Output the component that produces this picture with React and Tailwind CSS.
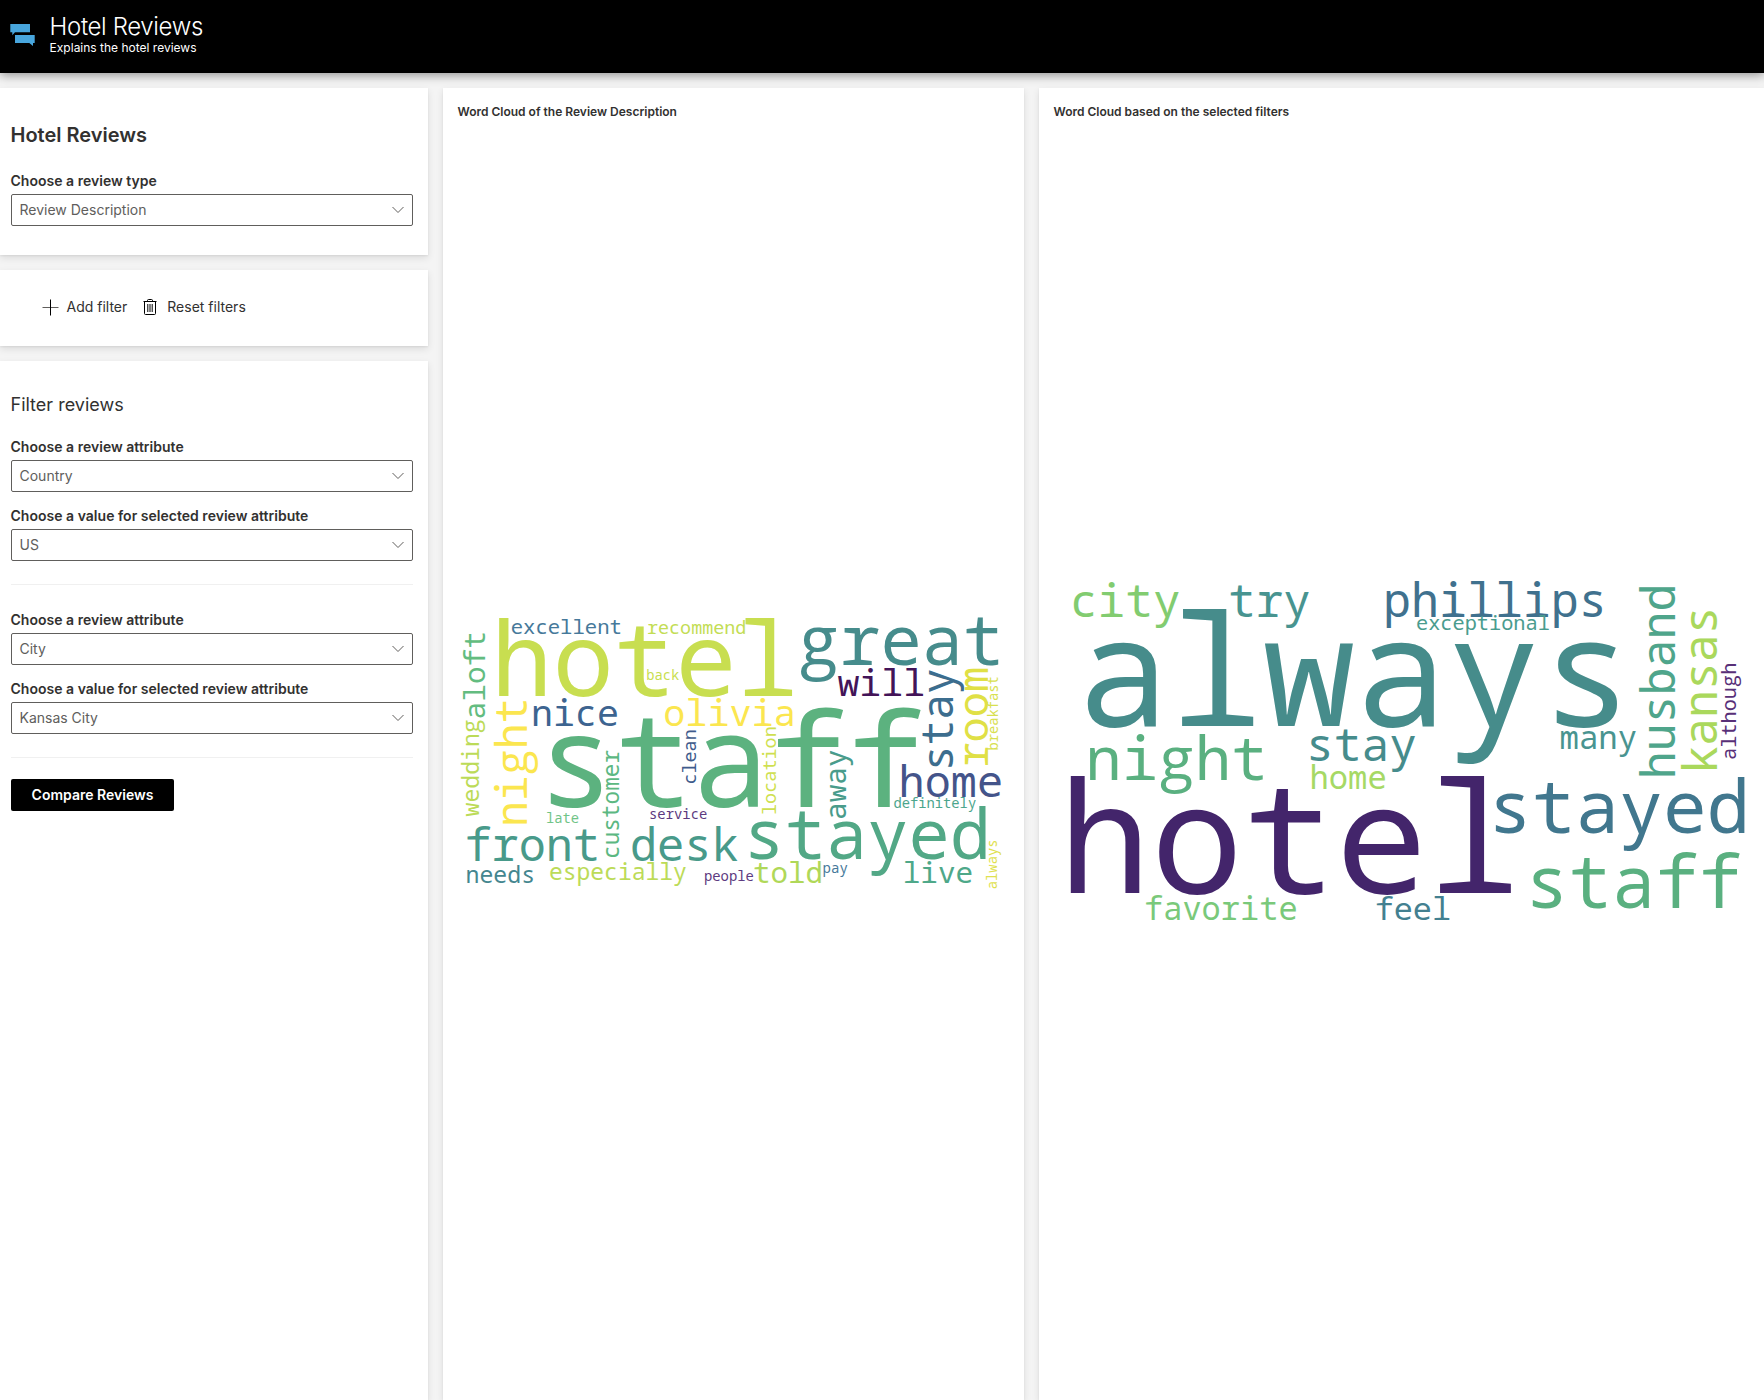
import React from "react";

// Each word: [text, font size, start of the baseline, cross-axis position of the baseline, colour]
const descriptionCloud = {
  viewBox: "458 615.8 551 275",
  label: "Word cloud of the review description",
  across: [
    ["excellent", 20.6, 510.7, 634.7, "#46799a"],
    ["recommend", 18.4, 647, 634.7, "#c3dd55"],
    ["hotel", 102.4, 491, 696.7, "#c8de50"],
    ["nice", 36.6, 531.1, 727, "#3d6490"],
    ["olivia", 36.8, 663.3, 727, "#fbe64f"],
    ["back", 13.8, 646.2, 680.4, "#c8de50"],
    ["staff", 129.1, 537.2, 808, "#5cb27f"],
    ["late", 13.8, 545.9, 823.8, "#70c487"],
    ["service", 13.9, 649, 819.8, "#5d3a80"],
    ["front", 45.2, 464.5, 861.7, "#489a8a"],
    ["desk", 45.3, 629.9, 861.7, "#489a8a"],
    ["needs", 23.2, 465.5, 884, "#44868f"],
    ["especially", 23, 548.9, 880.4, "#bcdb58"],
    ["people", 13.9, 703.9, 881.8, "#5d3a80"],
    ["great", 68.7, 798, 666, "#468c8c"],
    ["will", 36.6, 837.4, 696.7, "#431458"],
    ["home", 43.5, 898.6, 798.3, "#44548a"],
    ["definitely", 13.8, 893.4, 808.8, "#4ba58c"],
    ["stayed", 68.7, 743.6, 860.3, "#52a886"],
    ["told", 29.2, 753, 884, "#b0d858"],
    ["pay", 14, 822.6, 873.8, "#46799a"],
    ["live", 29.4, 902.7, 884, "#4ea889"],
  ],
  up: [
    ["aloft", 29.5, 720.3, 485.3, "#63bc80"],
    ["wedding", 23.1, 817.2, 479, "#bcdb58"],
    ["night", 43.2, 827.9, 527, "#fbe64f"],
    ["clean", 18.4, 785.3, 696, "#3f5b8c"],
    ["customer", 22.7, 859.7, 618.7, "#5cb882"],
    ["stay", 42.9, 772.1, 953.3, "#3c6d8e"],
    ["room", 42, 768.4, 988, "#e0e045"],
    ["breakfast", 13.8, 751.4, 998, "#d8e04f"],
    ["location", 18.5, 815.8, 776.3, "#cfdf50"],
    ["away", 29.4, 820.7, 846, "#499c8b"],
    ["always", 13.8, 890, 997, "#dfe150"],
  ],
};

const filteredCloud = {
  viewBox: "1054 579.3 695 347",
  label: "Word cloud based on the selected filters",
  across: [
    ["city", 46.2, 1069.9, 617.2, "#82cc70"],
    ["try", 45.8, 1228.2, 617.2, "#489490"],
    ["phillips", 46.6, 1383.1, 617.2, "#40718e"],
    ["exceptional", 20.3, 1416, 630.7, "#4a9c8e"],
    ["always", 154.5, 1077, 726.7, "#468c8b"],
    ["night", 60.9, 1085.2, 780.7, "#5ab080"],
    ["stay", 46.3, 1306, 761.7, "#468c8c"],
    ["home", 32.2, 1309.5, 789.7, "#a6d965"],
    ["hotel", 153.9, 1058.4, 893, "#43256b"],
    ["favorite", 32, 1144, 920.8, "#7ac97a"],
    ["feel", 31.8, 1374.7, 920.8, "#438090"],
    ["many", 32.4, 1559.5, 749.7, "#499490"],
    ["stayed", 72.8, 1488.2, 833.7, "#41778e"],
    ["staff", 72.2, 1525.3, 908.7, "#5ab080"],
  ],
  up: [
    ["husband", 46.6, 779.6, 1675.3, "#4fa58b"],
    ["kansas", 46.5, 774.1, 1717, "#aad85c"],
    ["although", 20.3, 760.3, 1736.3, "#583078"],
  ],
};

// The two-storey "g" comes from Open Sans, centred in the monospaced cell.
function Letters({ text }) {
  const at = text.indexOf("g");
  if (at < 0) return text;
  return (
    <>
      {text.slice(0, at)}
      <tspan dx="0.03em" className="font-['Open_Sans']">g</tspan>
      {at + 1 < text.length && <tspan dx="0.027em">{text.slice(at + 1)}</tspan>}
    </>
  );
}

function WordCloud({ cloud, className }) {
  return (
    <svg viewBox={cloud.viewBox} role="img" aria-label={cloud.label} className={`overflow-visible font-['Noto_Sans_Mono',monospace] ${className}`}>
      {cloud.across.map(([text, size, x, y, fill]) => (
        <text key={text} fontSize={size} x={x} y={y} fill={fill}>
          <Letters text={text} />
        </text>
      ))}
      {cloud.up.map(([text, size, y, x, fill]) => (
        <text key={text} fontSize={size} transform={`translate(${x} ${y}) rotate(-90)`} fill={fill}>
          <Letters text={text} />
        </text>
      ))}
    </svg>
  );
}

const cardShadow = "bg-white shadow-[0_3.2px_7.2px_rgba(0,0,0,0.1),0_0.6px_1.8px_rgba(0,0,0,0.06)]";

function Select({ label, value, className = "" }) {
  return (
    <div className={className}>
      <div className="-ml-[0.5px] mb-[3px] text-sm font-semibold tracking-[0.02px] text-[#323130]">{label}</div>
      <div className="flex h-8 items-center justify-between rounded-xs border border-[#605e5c] pr-2 pl-[7.5px] text-sm text-[#605e5c]">
        <span>{value}</span>
        <svg width="12" height="8" viewBox="0 0 12 8" fill="none" stroke="#605e5c">
          <path d="M0.5 1 L6 6.5 L11.5 1" />
        </svg>
      </div>
    </div>
  );
}

function CloudCard({ title, cloud, className, cloudClass }) {
  return (
    <section className={`flex flex-col px-[15px] pt-4 ${cardShadow} ${className}`}>
      <h2 className="-ml-[0.5px] text-xs font-semibold text-[#323130]">{title}</h2>
      <div className="flex h-[1265px] shrink-0 items-center">
        <WordCloud cloud={cloud} className={cloudClass} />
      </div>
    </section>
  );
}

export default function App() {
  return (
    <div className="flex h-[1400px] w-[1764px] flex-col overflow-hidden bg-[#f4f4f4] font-['Inter',sans-serif] text-[#323130]">
      <header className="z-10 flex h-[73px] shrink-0 gap-[15px] bg-black pt-[13px] pl-[10px] text-white shadow-[0_2px_10px_rgba(0,0,0,0.42)]">
        <svg width="25" height="23" viewBox="0 0 25 23" fill="#48a6dd" className="mt-[11px]">
          <path d="M0.3 0H20V8.3H5L2.3 11.3V8.3H0.3Z" />
          <path d="M5 11H24.7V19H23V22L19.3 19H5Z" />
        </svg>
        <div className="-ml-[0.4px]">
          <h1 className="text-2xl leading-[27px] font-light tracking-[-0.35px]">Hotel Reviews</h1>
          <p className="text-xs">Explains the hotel reviews</p>
        </div>
      </header>

      <main className="flex flex-1 gap-[15px] pt-[15px]">
        <div className="flex w-[428px] flex-col gap-[15px]">
          <section className={`h-[167px] pt-[35px] pr-[15px] pl-[11px] ${cardShadow}`}>
            <h2 className="-ml-[0.5px] mb-6 text-xl leading-6 font-semibold">Hotel Reviews</h2>
            <Select label="Choose a review type" value="Review Description" />
          </section>

          <section className={`flex h-[76px] items-center pb-0.5 pl-[42px] text-sm ${cardShadow}`}>
            <button className="flex items-center gap-[7.5px]">
              <svg width="17" height="17" viewBox="0 0 17 17" fill="none">
                <path d="M0.5 8.5H16.5" stroke="#605e5c" />
                <path d="M8.5 0.5V16.5" stroke="#000" />
              </svg>
              Add filter
            </button>
            <button className="ml-4 flex items-center gap-[10px]">
              <svg width="14" height="16" viewBox="0 0 14 16" fill="none" stroke="#000">
                <path d="M0.5 2.5H13.5M4.5 2.5V1.5Q4.5 0.5 5.5 0.5H8.5Q9.5 0.5 9.5 1.5V2.5M1.5 2.5V14.5Q1.5 15.5 2.5 15.5H11.5Q12.5 15.5 12.5 14.5V2.5" />
                <path d="M4.8 5V13M7 5V13M9.2 5V13" />
              </svg>
              Reset filters
            </button>
          </section>

          <section className={`flex-1 pt-8 pr-[15px] pl-[11px] ${cardShadow}`}>
            <h2 className="-ml-[0.5px] mb-5 text-lg leading-6">Filter reviews</h2>
            <Select label="Choose a review attribute" value="Country" />
            <Select label="Choose a value for selected review attribute" value="US" className="mt-[14px]" />
            <hr className="mt-[23px] mb-[25px] border-[#f0f0f0]" />
            <Select label="Choose a review attribute" value="City" />
            <Select label="Choose a value for selected review attribute" value="Kansas City" className="mt-[14px]" />
            <hr className="mt-[23px] mb-[21px] border-[#f0f0f0]" />
            <button className="h-8 w-[163px] rounded-xs bg-black text-sm font-semibold text-white">Compare Reviews</button>
          </section>
        </div>

        <CloudCard
          title="Word Cloud of the Review Description"
          cloud={descriptionCloud}
          className="w-[581px]"
          cloudClass="h-[275px] w-[551px]"
        />
        <CloudCard
          title="Word Cloud based on the selected filters"
          cloud={filteredCloud}
          className="w-[725px]"
          cloudClass="h-[347px] w-[695px]"
        />
      </main>
    </div>
  );
}
